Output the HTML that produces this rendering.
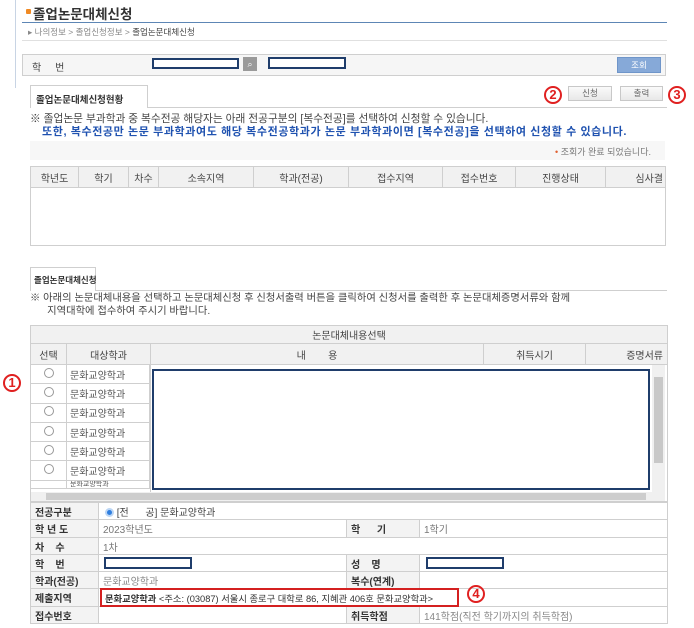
<!DOCTYPE html>
<html><head><meta charset="utf-8"><style>
*{box-sizing:border-box;margin:0;padding:0}
body{width:694px;height:628px;background:#fff;position:relative;overflow:hidden;font-family:"Liberation Sans","Noto Sans CJK KR","NanumGothic",sans-serif;font-size:10px;color:#555}
.a{position:absolute;white-space:nowrap}
.circ{position:absolute;width:18px;height:18px;border:2px solid #e02020;border-radius:50%;color:#e02020;font-weight:bold;font-size:13px;line-height:14px;text-align:center}
table{border-collapse:collapse;position:absolute}
td,th{border:1px solid #cfcfcf;font-weight:normal;white-space:nowrap;overflow:hidden}
.rad{display:inline-block;width:10px;height:10px;border:1px solid #999;border-radius:50%}
.box{position:absolute;border:2px solid #1f3d6b;background:#fff}
.btn{position:absolute;border:1px solid #c8c8c8;background:linear-gradient(#fafafa,#e8e8e8);text-align:center;font-size:8.5px;color:#666;line-height:13px}
.lb{background:#f3f3f3;color:#333;font-weight:bold}
</style></head><body>
<div class="a" style="left:15px;top:0;width:1px;height:88px;background:#c8d4e4"></div>
<div class="a" style="left:26px;top:9px;width:5px;height:5px;background:#f08a24;border-radius:1px"></div>
<div class="a" style="left:33px;top:3px;font-size:13.5px;font-weight:bold;color:#333">졸업논문대체신청</div>
<div class="a" style="left:22px;top:22px;width:645px;height:1px;background:#5d86b5"></div>
<div class="a" style="left:28px;top:26px;font-size:8.5px;color:#888">▸ 나의정보 &gt; 졸업신청정보 &gt; <span style="color:#444">졸업논문대체신청</span></div>
<div class="a" style="left:22px;top:40px;width:645px;height:1px;background:#e0e0e0"></div>

<div class="a" style="left:22px;top:54px;width:644px;height:22px;border:1px solid #cfcfcf;background:#f6f6f6"></div>
<div class="a" style="left:32px;top:59px;font-size:10px;color:#444">학&nbsp;&nbsp;&nbsp;&nbsp;&nbsp;번</div>
<div class="box" style="left:152px;top:58px;width:87px;height:11px"></div>
<div class="a" style="left:243px;top:57px;width:14px;height:14px;background:#9a9a9a;color:#fff;font-size:9px;text-align:center;line-height:14px">⌕</div>
<div class="box" style="left:268px;top:57px;width:78px;height:12px"></div>
<div class="a" style="left:617px;top:57px;width:44px;height:16px;background:#86a9d8;color:#fff;font-size:8.5px;text-align:center;line-height:15px;border:1px solid #6f95c9">조회</div>

<div class="a" style="left:30px;top:85px;width:118px;height:23px;border:1px solid #cfcfcf;border-bottom:none;background:#fff;font-weight:bold;color:#333;font-size:9.5px;padding:6px 0 0 5px">졸업논문대체신청현황</div>
<div class="a" style="left:148px;top:107px;width:519px;height:1px;background:#cfcfcf"></div>
<div class="btn" style="left:568px;top:86px;width:44px;height:15px">신청</div>
<div class="btn" style="left:620px;top:86px;width:43px;height:15px">출력</div>
<div class="circ" style="left:544px;top:86px">2</div>
<div class="circ" style="left:668px;top:86px">3</div>

<div class="a" style="left:30px;top:111px;font-size:10.7px;color:#444">※ 졸업논문 부과학과 중 복수전공 해당자는 아래 전공구분의 [복수전공]를 선택하여 신청할 수 있습니다.</div>
<div class="a" style="left:42px;top:123px;font-size:11px;color:#1f52b0;font-weight:bold;letter-spacing:0.6px">또한, 복수전공만 논문 부과학과여도 해당 복수전공학과가 논문 부과학과이면 [복수전공]을 선택하여 신청할 수 있습니다.</div>

<div class="a" style="left:30px;top:141px;width:635px;height:19px;background:#f7f7f7;text-align:right;padding:4px 14px 0 0;font-size:9px;color:#777"><span style="color:#e06030">•</span> 조회가 완료 되었습니다.</div>

<table style="left:30px;top:166px;width:636px;height:80px;font-size:10px">
<tr style="height:21px;background:#f1f1f1;color:#444;text-align:center">
<td style="width:48px">학년도</td><td style="width:50px">학기</td><td style="width:30px">차수</td><td style="width:95px">소속지역</td><td style="width:95px">학과(전공)</td><td style="width:94px">접수지역</td><td style="width:73px">접수번호</td><td style="width:90px">진행상태</td><td style="text-align:right;padding-right:2px">심사결</td></tr>
<tr><td colspan="9"></td></tr>
</table>

<div class="a" style="left:30px;top:267px;width:66px;height:24px;border:1px solid #cfcfcf;border-bottom:none;background:#fff;font-weight:bold;color:#333;font-size:8.5px;padding:6px 0 0 3px">졸업논문대체신청</div>
<div class="a" style="left:95px;top:290px;width:572px;height:1px;background:#cfcfcf"></div>
<div class="a" style="left:30px;top:292px;font-size:10.3px;color:#444;line-height:13px">※ 아래의 논문대체내용을 선택하고 논문대체신청 후 신청서출력 버튼을 클릭하여 신청서를 출력한 후 논문대체증명서류와 함께<br>&nbsp;&nbsp;&nbsp;&nbsp;&nbsp;&nbsp;지역대학에 접수하여 주시기 바랍니다.</div>

<div class="a" style="left:30px;top:325px;width:638px;height:177px;border:1px solid #cfcfcf"></div>
<table style="left:30px;top:325px;width:638px;font-size:10px">
<tr style="height:18px;background:#f1f1f1;text-align:center;color:#444"><td colspan="5">논문대체내용선택</td></tr>
<tr style="height:21px;background:#f1f1f1;text-align:center;color:#444">
<td style="width:36px">선택</td><td style="width:84px">대상학과</td><td style="width:333px">내&nbsp;&nbsp;&nbsp;&nbsp;&nbsp;&nbsp;&nbsp;&nbsp;용</td><td style="width:102px">취득시기</td><td style="text-align:right;padding-right:4px">증명서류</td></tr>
</table>
<table style="left:30px;top:364px;width:120px;font-size:10px">
<tr style="height:19.3px"><td style="width:36px;text-align:center"><span class="rad"></span></td><td style="padding-left:3px">문화교양학과</td></tr>
<tr style="height:19.3px"><td style="text-align:center"><span class="rad"></span></td><td style="padding-left:3px">문화교양학과</td></tr>
<tr style="height:19.3px"><td style="text-align:center"><span class="rad"></span></td><td style="padding-left:3px">문화교양학과</td></tr>
<tr style="height:19.3px"><td style="text-align:center"><span class="rad"></span></td><td style="padding-left:3px">문화교양학과</td></tr>
<tr style="height:19.3px"><td style="text-align:center"><span class="rad"></span></td><td style="padding-left:3px">문화교양학과</td></tr>
<tr style="height:19.3px"><td style="text-align:center"><span class="rad"></span></td><td style="padding-left:3px">문화교양학과</td></tr>
<tr style="height:8px"><td style="text-align:center"></td><td style="padding-left:3px;font-size:7px;line-height:7px">문화교양학과</td></tr>
</table>
<div class="a" style="left:150px;top:364px;width:500px;height:128px;border-left:1px solid #cfcfcf"></div>
<div class="box" style="left:152px;top:369px;width:498px;height:121px"></div>
<div class="a" style="left:652px;top:365px;width:13px;height:127px;background:#f0f0f0"></div>
<div class="a" style="left:654px;top:377px;width:9px;height:86px;background:#c8c8c8"></div>
<div class="a" style="left:31px;top:492px;width:634px;height:9px;background:#f0f0f0"></div>
<div class="a" style="left:46px;top:493px;width:600px;height:7px;background:#cdcdcd"></div>

<table style="left:30px;top:502px;width:638px;font-size:10px">
<tr style="height:17px"><td class="lb" style="width:68px;padding-left:4px">전공구분</td><td colspan="3" style="padding-left:6px;color:#444"><span style="display:inline-block;width:9px;height:9px;border-radius:50%;background:#2f7fe0;border:2px solid #bcd6f5;vertical-align:middle"></span> [전&nbsp;&nbsp;&nbsp;&nbsp;&nbsp;&nbsp;공] 문화교양학과</td></tr>
<tr style="height:18px"><td class="lb" style="padding-left:4px">학 년 도</td><td style="width:248px;padding-left:4px;color:#777">2023학년도</td><td class="lb" style="width:73px;padding-left:4px">학&nbsp;&nbsp;&nbsp;&nbsp;&nbsp;&nbsp;기</td><td style="padding-left:4px;color:#777">1학기</td></tr>
<tr style="height:17px"><td class="lb" style="padding-left:4px">차&nbsp;&nbsp;&nbsp;&nbsp;수</td><td colspan="3" style="padding-left:4px;color:#777">1차</td></tr>
<tr style="height:17px"><td class="lb" style="padding-left:4px">학&nbsp;&nbsp;&nbsp;&nbsp;번</td><td></td><td class="lb" style="padding-left:4px">성&nbsp;&nbsp;&nbsp;&nbsp;명</td><td></td></tr>
<tr style="height:17px"><td class="lb" style="padding-left:4px">학과(전공)</td><td style="padding-left:4px;color:#888">문화교양학과</td><td class="lb" style="padding-left:4px">복수(연계)</td><td></td></tr>
<tr style="height:18px"><td class="lb" style="padding-left:4px">제출지역</td><td colspan="3"></td></tr>
<tr style="height:17px"><td class="lb" style="padding-left:4px">접수번호</td><td></td><td class="lb" style="padding-left:4px">취득학점</td><td style="padding-left:4px;color:#888">141학점(직전 학기까지의 취득학점)</td></tr>
</table>
<div class="box" style="left:104px;top:557px;width:88px;height:12px"></div>
<div class="box" style="left:426px;top:557px;width:78px;height:12px"></div>
<div class="a" style="left:100px;top:588px;width:359px;height:19px;border:2px solid #d42020;padding:1px 0 0 3px;font-size:9.3px;color:#333;overflow:hidden"><b>문화교양학과</b> &lt;주소: (03087) 서울시 종로구 대학로 86, 지혜관 406호 문화교양학과&gt;</div>

<div class="circ" style="left:3px;top:374px">1</div>
<div class="circ" style="left:467px;top:585px">4</div>
</body></html>
